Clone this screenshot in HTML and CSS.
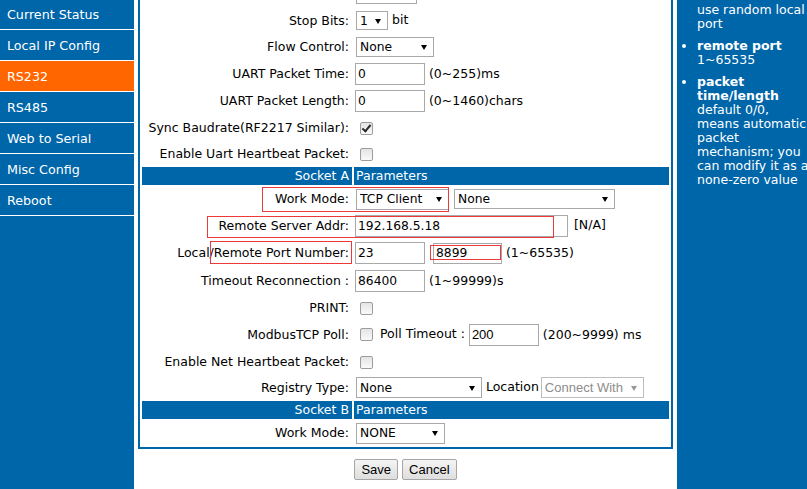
FILE: index.html
```html
<!DOCTYPE html>
<html>
<head>
<meta charset="utf-8">
<title>RS232</title>
<link rel="stylesheet" href="styles.css">
</head>
<body>
<nav class="sidebar">
  <ul class="nav">
    <li class="nav-item">Current Status</li>
    <li class="nav-item">Local IP Config</li>
    <li class="nav-item active">RS232</li>
    <li class="nav-item">RS485</li>
    <li class="nav-item">Web to Serial</li>
    <li class="nav-item">Misc Config</li>
    <li class="nav-item">Reboot</li>
  </ul>
</nav>

<main class="main">
  <div class="frame">
    <table class="form">
      <tr class="h24"><td class="lbl">Data Bits:</td><td class="val"><span class="sel"><select class="w61"><option>8</option></select></span></td></tr>
      <tr class="h25"><td class="lbl">Stop Bits:</td><td class="val"><span class="sel"><select class="w32 s19"><option>1</option></select></span> bit</td></tr>
      <tr class="h24"><td class="lbl">Flow Control:</td><td class="val"><span class="sel"><select class="w78"><option>None</option></select></span></td></tr>
      <tr class="h25"><td class="lbl">UART Packet Time:</td><td class="val"><input class="txt" type="text" value="0"> (0~255)ms</td></tr>
      <tr class="h25"><td class="lbl">UART Packet Length:</td><td class="val"><input class="txt" type="text" value="0"> (0~1460)chars</td></tr>
      <tr class="h25"><td class="lbl">Sync Baudrate(RF2217 Similar):</td><td class="val"><input class="cb" type="checkbox" checked></td></tr>
      <tr class="h23"><td class="lbl">Enable Uart Heartbeat Packet:</td><td class="val"><input class="cb" type="checkbox"></td></tr>
      <tr class="head"><td class="lbl">Socket A</td><td class="val">Parameters</td></tr>
      <tr class="h24"><td class="lbl">Work Mode:</td><td class="val"><span class="sel"><select class="w93 s21"><option>TCP Client</option></select></span> <span class="sel"><select class="w161"><option>None</option></select></span></td></tr>
      <tr class="h25"><td class="lbl">Remote Server Addr:</td><td class="val"><input class="txt w213" type="text" value="192.168.5.18"> <span class="na">[N/A]</span></td></tr>
      <tr class="h26"><td class="lbl">Local/Remote Port Number:</td><td class="val"><input class="txt" type="text" value="23"> <input class="txt port2" type="text" value="8899"> (1~65535)</td></tr>
      <tr class="h25"><td class="lbl">Timeout Reconnection :</td><td class="val"><input class="txt" type="text" value="86400"> (1~99999)s</td></tr>
      <tr class="h25"><td class="lbl">PRINT:</td><td class="val"><input class="cb" type="checkbox"></td></tr>
      <tr class="h25"><td class="lbl">ModbusTCP Poll:</td><td class="val"><input class="cb" type="checkbox"> <span class="poll">Poll Timeout :</span> <input class="txt arial" type="text" value="200"> (200~9999) ms</td></tr>
      <tr class="h25"><td class="lbl">Enable Net Heartbeat Packet:</td><td class="val"><input class="cb" type="checkbox"></td></tr>
      <tr class="h23"><td class="lbl">Registry Type:</td><td class="val"><span class="sel"><select class="w126 s21"><option>None</option></select></span> Location<span class="sel off"><select class="w103 s21 arial" disabled><option>Connect With</option></select></span></td></tr>
      <tr class="head"><td class="lbl">Socket B</td><td class="val">Parameters</td></tr>
      <tr class="h24"><td class="lbl">Work Mode:</td><td class="val"><span class="sel"><select class="w89 s21"><option>NONE</option></select></span></td></tr>
    </table>
    <div class="mark mark-mode"></div>
    <div class="mark mark-addr"></div>
    <div class="mark mark-port"></div>
    <div class="mark mark-port2"></div>
  </div>
  <div class="actions">
    <button class="btn" type="button">Save</button> <button class="btn" type="button">Cancel</button>
  </div>
</main>

<aside class="help">
  <ul class="tips">
    <li><b>local port</b><br>0~65535, set<br>this to 0 means<br>use random local<br>port</li>
    <li><b>remote port</b><br>1~65535</li>
    <li><b>packet<br>time/length</b><br>default 0/0,<br>means automatic<br>packet<br>mechanism; you<br>can modify it as a<br>none-zero value</li>
  </ul>
</aside>
</body>
</html>
```
FILE: styles.css
```css
html, body {
  margin: 0;
  padding: 0;
}

body {
  display: flex;
  height: 489px;
  overflow: hidden;
  background: #ffffff;
  font-family: "DejaVu Sans", Verdana, sans-serif;
  font-size: 12.5px;
  color: #000;
}

/* ---------- sidebar ---------- */
.sidebar {
  flex: none;
  width: 134px;
  background: #0066aa;
}

.nav {
  list-style: none;
  margin: -1px 0 0 0;
  padding: 0;
}

.nav-item {
  height: 30px;
  line-height: 32px;
  padding-left: 7px;
  border-bottom: 1px solid #ffffff;
  color: #ffffff;
  font-size: 12.7px;
  white-space: nowrap;
  overflow: hidden;
}

.nav-item.active {
  background: #ff6600;
}

/* ---------- main form ---------- */
.main {
  flex: none;
  width: 535px;
  margin: 0 4px;
}

.frame {
  position: relative;
  margin-top: -22px;
  border: 2px solid #0066aa;
}

.form {
  border-collapse: separate;
  border-spacing: 2px;
  width: 100%;
}

.form td {
  padding: 0;
  line-height: 16px;
  vertical-align: middle;
  white-space: nowrap;
}

.form td.lbl {
  width: 207px;
  padding-right: 3px;
  text-align: right;
}

.form td.val {
  padding-left: 1px;
  text-align: left;
}

.h23 > td { height: 23px; }
.h24 > td { height: 24px; }
.h25 > td { height: 25px; }
.h26 > td { height: 26px; }

.head > td {
  height: 18px;
  background: #0066aa;
  color: #ffffff;
}

.head > td.val {
  padding-left: 2px;
}

/* text inputs */
.txt {
  box-sizing: border-box;
  width: 70px;
  height: 22px;
  margin: 0;
  padding: 0 2px;
  border: 1px solid #a9a9a9;
  background: #fff;
  font-family: "DejaVu Sans", Verdana, sans-serif;
  font-size: 12.3px;
  color: #000;
  vertical-align: middle;
}

.txt.w213 { width: 213px; }
.txt.port2 { width: 69px; height: 21px; margin-left: 4px; }

.arial {
  font-family: "Liberation Sans", Arial, sans-serif;
  font-size: 13px;
}

.na { margin-left: 2px; }

.poll { margin-left: 3px; }

/* selects */
.sel {
  position: relative;
  display: inline-block;
  vertical-align: middle;
  margin-left: 1px;
}

.sel::after {
  content: "";
  position: absolute;
  right: 7px;
  top: 50%;
  margin-top: -2px;
  border-left: 3.5px solid transparent;
  border-right: 3.5px solid transparent;
  border-top: 5px solid #000;
  pointer-events: none;
}

.sel.off { margin-left: 2px; }
.sel.off::after { border-top-color: #9a9a9a; }

.sel select {
  -webkit-appearance: none;
  appearance: none;
  box-sizing: border-box;
  display: block;
  height: 20px;
  margin: 0;
  padding: 0 14px 0 3px;
  border: 1px solid #a9a9a9;
  border-radius: 0;
  background: #ffffff;
  font-family: "DejaVu Sans", Verdana, sans-serif;
  font-size: 12.3px;
  color: #000;
}

.sel select.arial {
  font-family: "Liberation Sans", Arial, sans-serif;
  font-size: 13px;
}

.sel select:disabled {
  color: #8d8d8d;
  border-color: #bdbdbd;
  opacity: 1;
}

.w32 { width: 32px; }
.w61 { width: 61px; }
.w78 { width: 78px; }
.w89 { width: 89px; }
.w93 { width: 93px; }
.w103 { width: 103px; }
.w126 { width: 126px; }
.w161 { width: 161px; }
.sel select.s19 { height: 19px; }
.sel select.s21 { height: 21px; }

/* checkboxes */
.cb {
  -webkit-appearance: none;
  appearance: none;
  position: relative;
  box-sizing: border-box;
  width: 13px;
  height: 13px;
  margin: 0 0 0 5px;
  border: 1px solid #9c9c9c;
  border-radius: 2px;
  background: linear-gradient(#e4e4e4, #fafafa);
  vertical-align: middle;
}

.cb:checked::after {
  content: "";
  position: absolute;
  left: 3px;
  top: 0px;
  width: 3px;
  height: 7px;
  border: solid #2b2b2b;
  border-width: 0 2px 2px 0;
  transform: rotate(40deg);
}

/* red annotation boxes */
.mark {
  position: absolute;
  box-sizing: border-box;
  border: 1px solid #ec3a3a;
  pointer-events: none;
}

.mark-mode  { left: 122px; top: 207px; width: 187px; height: 25px; }
.mark-addr  { left: 67px;  top: 236px; width: 347px; height: 22px; }
.mark-port  { left: 70px;  top: 261px; width: 142px; height: 23px; }
.mark-port2 { left: 290px; top: 265px; width: 71px;  height: 15px; }

/* buttons */
.actions {
  margin-top: 10px;
  text-align: center;
  font-size: 0;
}

.btn {
  box-sizing: border-box;
  height: 21px;
  margin: 0 2px;
  padding: 0 6px;
  border: 1px solid #a6a6a6;
  border-radius: 2px;
  background: linear-gradient(#f4f4f4, #dedede);
  font-family: "Liberation Sans", Arial, sans-serif;
  font-size: 13px;
  color: #000;
}

/* ---------- right help panel ---------- */
.help {
  flex: 1;
  min-width: 0;
  background: #0066aa;
  color: #ffffff;
  overflow: hidden;
}

.tips {
  margin: -39px 0 0 0;
  padding: 0 0 0 20px;
  font-size: 12.5px;
  line-height: 14px;
  white-space: nowrap;
}

.tips li {
  margin-bottom: 8px;
}
```
